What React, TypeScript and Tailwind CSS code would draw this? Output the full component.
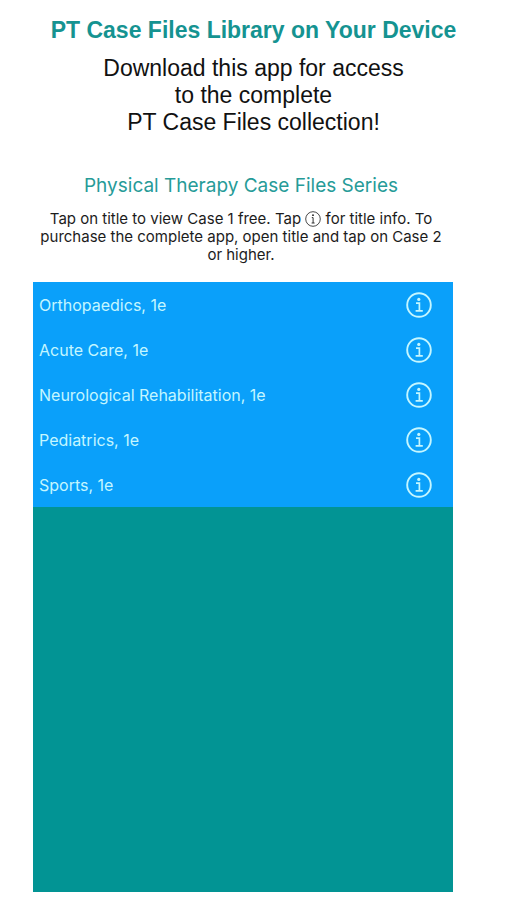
const titles = [
  { id: "orthopaedics", name: "Orthopaedics, 1e" },
  { id: "acute-care", name: "Acute Care, 1e" },
  { id: "neuro-rehab", name: "Neurological Rehabilitation, 1e" },
  { id: "pediatrics", name: "Pediatrics, 1e" },
  { id: "sports", name: "Sports, 1e" },
];

function InfoIcon() {
  return (
    <svg viewBox="0 0 26 26" className="size-[26px]" fill="none" stroke="currentColor" aria-hidden="true">
      <circle cx="13" cy="13" r="11.8" strokeWidth="1.9" />
      <circle cx="12.8" cy="7.4" r="1.6" fill="currentColor" stroke="none" />
      <path d="M10 11.2h3.4v7.4M9.6 18.8h7.2" strokeWidth="1.7" />
    </svg>
  );
}

function InlineInfoIcon() {
  return (
    <svg viewBox="0 0 16 16" className="inline size-4 align-[-3px]" fill="none" stroke="currentColor" role="img" aria-label="info">
      <circle cx="8" cy="8" r="7.3" strokeWidth="0.8" />
      <circle cx="8" cy="4.2" r="0.9" fill="currentColor" stroke="none" />
      <path d="M6.8 6.6h1.3v5.4M6.6 12h3" strokeWidth="0.9" />
    </svg>
  );
}

export default function App() {
  return (
    <div className="flex min-h-screen flex-col bg-white pb-2 font-['Inter',sans-serif]">
      <header className="pt-4 text-center font-['Liberation_Sans',Arial,sans-serif]">
        <h1 className="text-[23px] leading-7 font-bold text-[#159391]">
          PT Case Files Library on Your Device
        </h1>
        <p className="mt-[11px] text-[23px] leading-[27px] text-[#111111]">
          Download this app for access
          <br />
          to the complete
          <br />
          PT Case Files collection!
        </p>
      </header>

      <main className="mt-[38px] mr-[54px] ml-[33px] flex flex-1 flex-col">
        <h2 className="pr-1 text-center text-[19px] leading-6 text-[#269b98]">
          Physical Therapy Case Files Series
        </h2>
        <p className="mt-3 pr-2 pl-1 text-center text-[15px] leading-[18px] text-[#1c1c1c]">
          Tap on title to view Case 1 free. Tap <InlineInfoIcon /> for title info. To
          purchase the complete app, open title and tap on Case 2 or higher.
        </p>

        <div className="mt-[18px] flex-1 bg-[#029494]">
          <ul className="bg-[#0aa0fa] text-[#c4f6ff]">
            {titles.map((t) => (
              <li key={t.id} className="flex h-[45px] items-center pr-[21px] pl-[6px]">
                <a href={`#${t.id}`} className="flex-1 text-[16px] leading-5">
                  {t.name}
                </a>
                <button type="button" aria-label={`About ${t.name}`}>
                  <InfoIcon />
                </button>
              </li>
            ))}
          </ul>
        </div>
      </main>
    </div>
  );
}
